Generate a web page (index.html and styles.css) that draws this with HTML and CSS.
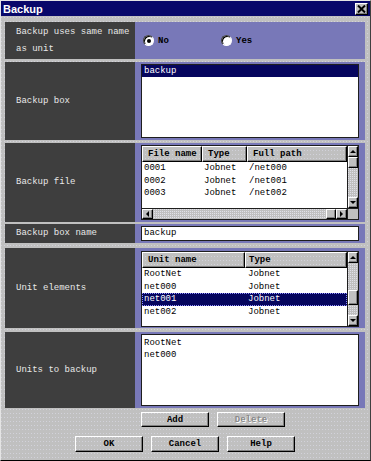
FILE: index.html
```html
<!DOCTYPE html>
<html>
<head>
<meta charset="utf-8">
<title>Backup</title>
<link rel="stylesheet" href="styles.css">
</head>
<body>
<div class="window">
  <div class="titlebar">
    <span class="title">Backup</span>
    <span class="close"><svg width="9" height="8" viewBox="0 0 9 8"><path d="M1 0.5 L8 7.5 M8 0.5 L1 7.5" stroke="#000" stroke-width="2"/></svg></span>
  </div>
  <div class="content">
    <div class="row r1">
      <div class="label">Backup uses same name<br>as unit</div>
      <div class="field radios">
        <div class="radio"><span class="dot checked"></span><b>No</b></div>
        <div class="radio"><span class="dot"></span><b>Yes</b></div>
      </div>
    </div>
    <div class="row r2">
      <div class="label">Backup box</div>
      <div class="field">
        <div class="list">
          <div class="item sel">backup</div>
        </div>
      </div>
    </div>
    <div class="row r3">
      <div class="label">Backup file</div>
      <div class="field">
        <div class="grid with-h">
          <div class="main">
            <div class="thead cols3">
              <div class="th">File name</div><div class="th">Type</div><div class="th">Full path</div>
            </div>
            <div class="tr cols3"><div>0001</div><div>Jobnet</div><div>/net000</div></div>
            <div class="tr cols3"><div>0002</div><div>Jobnet</div><div>/net001</div></div>
            <div class="tr cols3"><div>0003</div><div>Jobnet</div><div>/net002</div></div>
          </div>
          <div class="vscroll">
            <div class="sbtn"><span class="tri up"></span></div>
            <div class="track">
              <div class="thumb t1"></div>
            </div>
            <div class="sbtn"><span class="tri down"></span></div>
          </div>
          <div class="hscroll">
            <div class="sbtn"><span class="tri left"></span></div>
            <div class="htrack"></div>
            <div class="hthumb"></div>
            <div class="sbtn"><span class="tri right"></span></div>
          </div>
          <div class="corner"></div>
        </div>
      </div>
    </div>
    <div class="row r4">
      <div class="label">Backup box name</div>
      <div class="field">
        <div class="input">backup</div>
      </div>
    </div>
    <div class="row r5">
      <div class="label">Unit elements</div>
      <div class="field f5">
        <div class="grid">
          <div class="main">
            <div class="thead cols2">
              <div class="th">Unit name</div><div class="th">Type</div>
            </div>
            <div class="tr cols2"><div>RootNet</div><div>Jobnet</div></div>
            <div class="tr cols2"><div>net000</div><div>Jobnet</div></div>
            <div class="tr cols2 sel"><div>net001</div><div>Jobnet</div></div>
            <div class="tr cols2"><div>net002</div><div>Jobnet</div></div>
          </div>
          <div class="vscroll">
            <div class="sbtn"><span class="tri up"></span></div>
            <div class="track">
              <div class="thumb t2"></div>
            </div>
            <div class="sbtn"><span class="tri down"></span></div>
          </div>
        </div>
      </div>
    </div>
    <div class="row r6">
      <div class="label">Units to backup</div>
      <div class="field">
        <div class="list plain">
          <div class="item">RootNet</div>
          <div class="item">net000</div>
        </div>
      </div>
    </div>
    <div class="btnrow addrow">
      <div class="btn">Add</div>
      <div class="btn disabled">Delete</div>
    </div>
    <div class="btnrow okrow">
      <div class="btn">OK</div>
      <div class="btn">Cancel</div>
      <div class="btn">Help</div>
    </div>
  </div>
</div>
</body>
</html>
```
FILE: styles.css
```css
* { box-sizing: border-box; }
html, body { margin: 0; padding: 0; }
body {
  font-family: "Liberation Mono", "DejaVu Sans Mono", monospace;
  font-size: 9px;
  color: #000;
  background: #c0c0c0;
}
.window {
  width: 371px;
  height: 461px;
  background-color: #c0c0c0;
  background-image: conic-gradient(at 1px 1px, transparent 75%, #d2d2da 0);
  background-size: 3px 4px;
  border: 1px solid;
  border-color: #e4e4e4 #404040 #000 #e4e4e4;
  display: flex;
  flex-direction: column;
  overflow: hidden;
}
.titlebar {
  height: 15px;
  flex: none;
  background: #08086a;
  display: flex;
  align-items: center;
  justify-content: space-between;
  padding: 0 2px 0 2px;
}
.title {
  font-family: "Liberation Sans", Arial, sans-serif;
  font-weight: bold;
  font-size: 11px;
  color: #fff;
}
.close {
  width: 13px;
  height: 12px;
  background: #c0c0c0;
  border: 1px solid;
  border-color: #fff #000 #000 #fff;
  box-shadow: inset -1px -1px #808080;
  display: flex;
  align-items: center;
  justify-content: center;
}
.close svg { display: block; }
.content {
  padding: 6px 5px 0 4px;
  display: flex;
  flex-direction: column;
}
.row {
  display: grid;
  grid-template-columns: 130px 1fr;
}
.r1 { height: 37px; }
.r2 { height: 78px; margin-top: 3px; }
.r3 { height: 79px; margin-top: 3px; }
.r4 { height: 19px; margin-top: 2px; }
.r5 { height: 80px; margin-top: 5px; }
.r6 { height: 76px; margin-top: 4px; }
.label {
  background: #3e3e3e;
  color: #e8e8e8;
  display: flex;
  align-items: center;
  padding-left: 11px;
  line-height: 17px;
}
.field {
  background: #7878b8;
  padding: 2px 6px 2px 6px;
  display: flex;
  flex-direction: column;
}
.f5 { padding-top: 3px; padding-bottom: 1px; }
.radios {
  flex-direction: row;
  align-items: center;
  padding-left: 8px;
}
.radio {
  display: flex;
  align-items: center;
  gap: 4px;
  width: 78px;
  font-weight: bold;
}
.dot {
  width: 11px;
  height: 11px;
  border-radius: 50%;
  background: #fff;
  border: 1px solid;
  border-color: #404040 #fff #fff #404040;
  box-shadow: inset 1px 1px #000;
  display: flex;
  align-items: center;
  justify-content: center;
}
.dot.checked::after {
  content: "";
  width: 4px;
  height: 4px;
  border-radius: 50%;
  background: #000;
}
.list {
  flex: 1;
  background: #fff;
  border: 1px solid #1e1e1e;
}
.plain { padding-top: 2px; }
.item {
  height: 12px;
  line-height: 12px;
  padding-left: 2px;
}
.item.sel {
  background: #06065e;
  color: #fff;
}
.input {
  flex: 1;
  background: #fff;
  border: 1px solid #1e1e1e;
  line-height: 13px;
  padding-left: 2px;
}
.grid {
  flex: 1;
  display: grid;
  grid-template-columns: 1fr 11px;
  grid-template-rows: 1fr;
  border: 1px solid #1e1e1e;
  background: #fff;
  overflow: hidden;
}
.grid.with-h { grid-template-rows: 1fr 11px; }
.main { overflow: hidden; min-height: 0; }
.cols3 { display: grid; grid-template-columns: 60px 45px 1fr; }
.cols2 { display: grid; grid-template-columns: 103px 1fr; }
.thead {
  height: 16px;
  background-color: #c0c0c0;
  background-image: conic-gradient(at 1px 1px, transparent 75%, #d2d2da 0);
  background-size: 3px 4px;
}
.th {
  border: 1px solid;
  border-color: #fff #000 #000 #fff;
  box-shadow: inset -1px -1px #808080;
  padding-left: 5px;
  line-height: 14px;
  font-weight: bold;
  white-space: nowrap;
}
.tr {
  height: 12.5px;
  line-height: 12.5px;
}
.tr > div { padding-left: 2px; white-space: nowrap; }
.cols2 > div + div { padding-left: 3px; }
.tr.sel {
  background: #06065e;
  color: #fff;
  outline: 1px dotted #9090ff;
  outline-offset: -1px;
}
.vscroll {
  display: flex;
  flex-direction: column;
  border-left: 1px solid #1e1e1e;
  background-color: #c0c0c0;
  background-image: conic-gradient(at 1px 1px, transparent 75%, #e0e0e8 0);
  background-size: 2px 2px;
}
.hscroll {
  display: flex;
  border-top: 1px solid #1e1e1e;
  background-color: #c0c0c0;
  background-image: conic-gradient(at 1px 1px, transparent 75%, #e0e0e8 0);
  background-size: 2px 2px;
}
.corner {
  background: #c0c0c0;
  border-left: 1px solid #1e1e1e;
  border-top: 1px solid #1e1e1e;
}
.sbtn {
  flex: none;
  width: 10px;
  height: 10px;
  background: #c0c0c0;
  border: 1px solid;
  border-color: #fff #000 #000 #fff;
  box-shadow: inset -1px -1px #808080;
  display: flex;
  align-items: center;
  justify-content: center;
}
.vscroll .sbtn { width: 100%; height: 11px; }
.hscroll .sbtn { height: 100%; width: 11px; }
.track { flex: 1; position: relative; }
.thumb {
  width: 100%;
  background: #c0c0c0;
  border: 1px solid;
  border-color: #fff #000 #000 #fff;
  box-shadow: inset -1px -1px #808080;
}
.t1 { height: 11px; }
.t2 { height: 15px; margin-top: 27px; }
.htrack { flex: 1; }
.hthumb {
  width: 10px;
  height: 100%;
  background: #c0c0c0;
  border: 1px solid;
  border-color: #fff #000 #000 #fff;
  box-shadow: inset -1px -1px #808080;
}
.tri { width: 0; height: 0; border: 3px solid transparent; }
.tri.up { border-bottom-color: #000; border-top-width: 0; }
.tri.down { border-top-color: #000; border-bottom-width: 0; }
.tri.left { border-right-color: #000; border-left-width: 0; }
.tri.right { border-left-color: #000; border-right-width: 0; }
.btnrow { display: flex; gap: 8px; }
.addrow { margin-top: 4px; padding-left: 136px; }
.okrow { margin-top: 9px; justify-content: center; }
.btn {
  width: 68px;
  height: 16px;
  background-color: #c0c0c0;
  background-image: conic-gradient(at 1px 1px, transparent 75%, #d2d2da 0);
  background-size: 3px 4px;
  border: 1px solid;
  border-color: #fff #000 #000 #fff;
  box-shadow: inset -1px -1px #808080;
  display: flex;
  align-items: center;
  justify-content: center;
  font-weight: bold;
}
.addrow .btn { height: 15px; }
.btn.disabled {
  color: #8a8a8a;
  text-shadow: 1px 1px #fff;
}
```
